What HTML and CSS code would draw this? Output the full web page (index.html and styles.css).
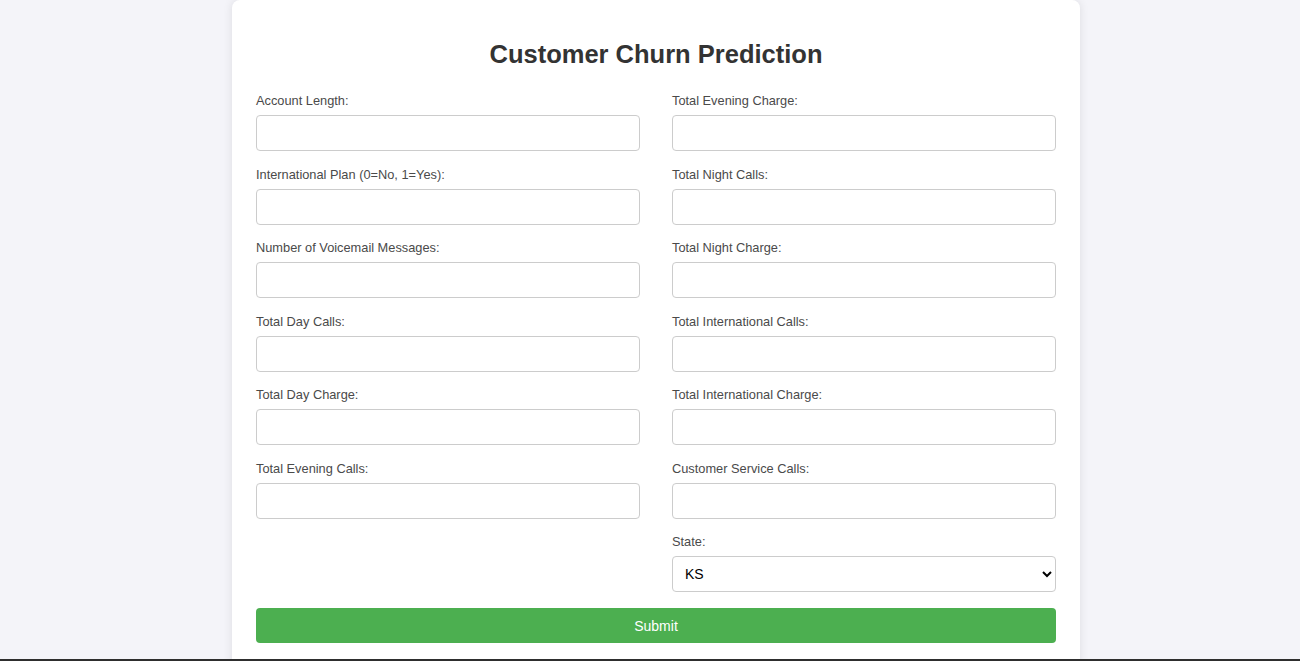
FILE: index.html
```html
<!DOCTYPE html>
<html lang="en">
<head>
<meta charset="utf-8">
<title>Customer Churn Prediction</title>
<link rel="stylesheet" href="styles.css">
</head>
<body>
<div class="card">
  <h2 class="title">Customer Churn Prediction</h2>
  <form class="form">
    <div class="cols">
      <div class="col">
        <div class="field"><label>Account Length:</label><input type="text"></div>
        <div class="field"><label>International Plan (0=No, 1=Yes):</label><input type="text"></div>
        <div class="field"><label>Number of Voicemail Messages:</label><input type="text"></div>
        <div class="field"><label>Total Day Calls:</label><input type="text"></div>
        <div class="field"><label>Total Day Charge:</label><input type="text"></div>
        <div class="field"><label>Total Evening Calls:</label><input type="text"></div>
      </div>
      <div class="col">
        <div class="field"><label>Total Evening Charge:</label><input type="text"></div>
        <div class="field"><label>Total Night Calls:</label><input type="text"></div>
        <div class="field"><label>Total Night Charge:</label><input type="text"></div>
        <div class="field"><label>Total International Calls:</label><input type="text"></div>
        <div class="field"><label>Total International Charge:</label><input type="text"></div>
        <div class="field"><label>Customer Service Calls:</label><input type="text"></div>
        <div class="field"><label>State:</label>
          <select class="state">
            <option>KS</option><option>OH</option><option>NJ</option><option>OK</option>
          </select>
        </div>
      </div>
    </div>
    <button type="button" class="submit">Submit</button>
  </form>
</div>
<div class="bottom-edge"></div>
</body>
</html>
```
FILE: styles.css
```css
html, body {
  margin: 0;
  padding: 0;
}
body {
  background: #f4f4f9;
  font-family: "Liberation Sans", Arial, sans-serif;
  display: flex;
  justify-content: center;
  padding-left: 12px;
  height: 661px;
  overflow: hidden;
}
.card {
  width: 800px;
  background: #ffffff;
  padding: 24px 24px 40px;
  border-radius: 8px;
  box-shadow: 0 0 10px rgba(0, 0, 0, 0.1);
  align-self: flex-start;
}
.title {
  margin: 15px 0 24px;
  font-size: 25.5px;
  line-height: 30px;
  font-weight: bold;
  color: #333333;
  text-align: center;
}
.cols {
  display: flex;
  gap: 32px;
}
.col {
  flex: 1;
  display: flex;
  flex-direction: column;
}
.field {
  display: flex;
  flex-direction: column;
  margin-bottom: 15.5px;
}
.field label {
  font-size: 12.8px;
  line-height: 15px;
  color: #4a4a4a;
  margin-bottom: 7px;
}
.field input,
.field select {
  box-sizing: border-box;
  width: 100%;
  height: 36px;
  border: 1px solid #cccccc;
  border-radius: 4px;
  padding: 0 10px;
  font-family: "Liberation Sans", Arial, sans-serif;
  font-size: 14px;
  background: #ffffff;
  color: #000000;
}
.field .state {
  padding: 0 8px;
}
.submit {
  display: block;
  width: 100%;
  height: 35px;
  margin-top: 0.5px;
  border: none;
  border-radius: 4px;
  background: #4caf50;
  color: #ffffff;
  font-family: "Liberation Sans", Arial, sans-serif;
  font-size: 14px;
}
.bottom-edge {
  position: fixed;
  left: 0;
  right: 0;
  bottom: 0;
  height: 2px;
  background: #2e2e2e;
}
```
